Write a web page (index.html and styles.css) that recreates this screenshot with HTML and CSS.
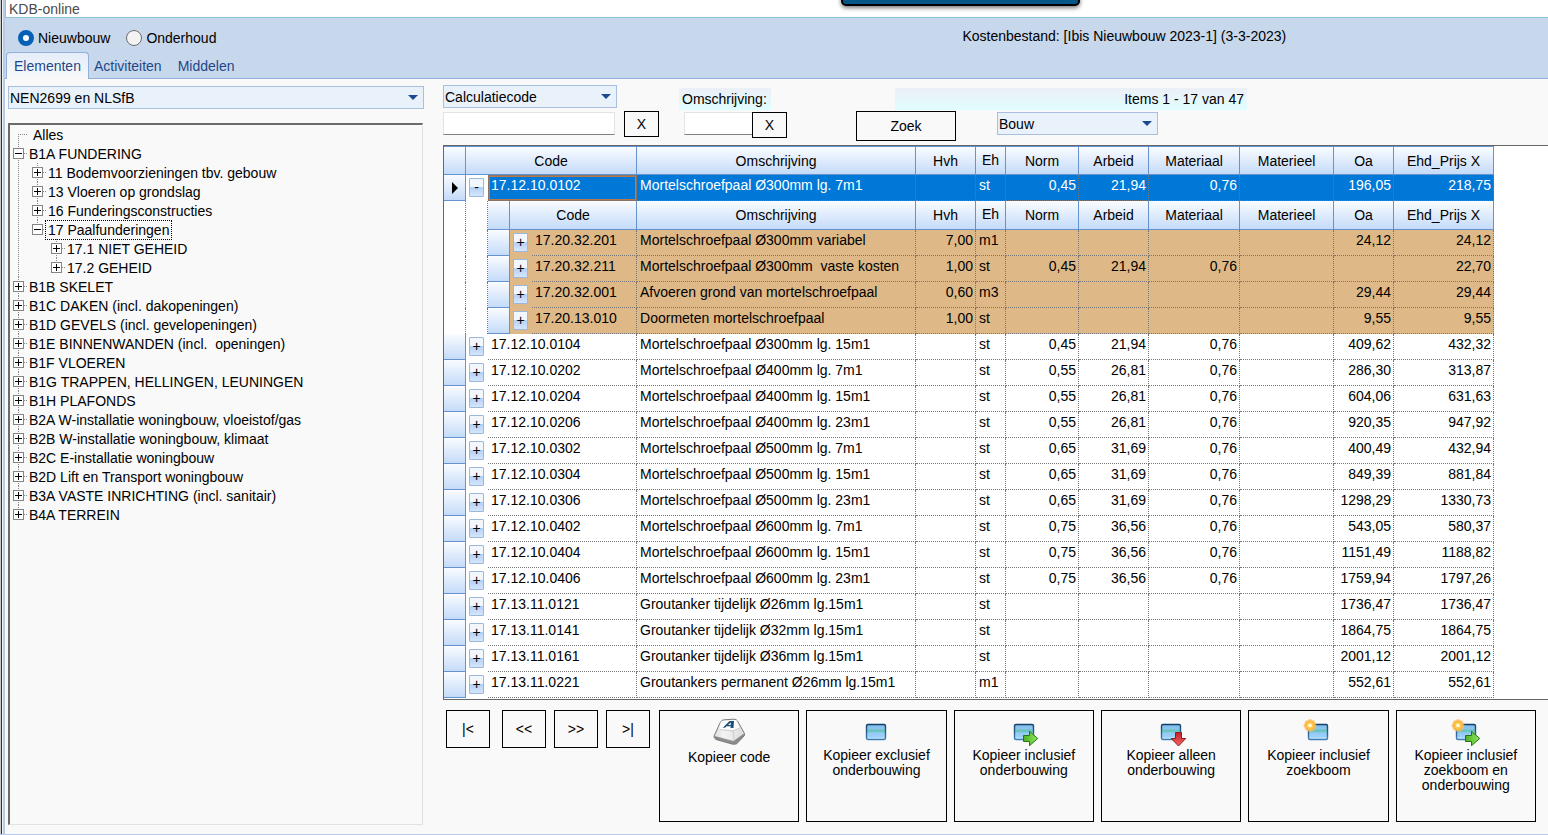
FILE: index.html
```html
<!DOCTYPE html>
<html lang="nl">
<head>
<meta charset="utf-8">
<title>KDB-online</title>
<link rel="stylesheet" href="styles.css">
</head>
<body>
<svg class="defs" width="0" height="0" aria-hidden="true">
  <defs>
    <linearGradient id="gWin" x1="0" y1="0" x2="0" y2="1"><stop offset="0" stop-color="#7fb9ec"/><stop offset=".3" stop-color="#8cc6ee"/><stop offset=".36" stop-color="#66c3bd"/><stop offset=".5" stop-color="#6fc6c4"/><stop offset=".55" stop-color="#93c9f5"/><stop offset=".8" stop-color="#9bd0fa"/><stop offset="1" stop-color="#d8f0fd"/></linearGradient>
    <linearGradient id="gEdge" x1="0" y1="0" x2="0" y2="1"><stop offset="0" stop-color="#123f66"/><stop offset="1" stop-color="#3f7fb4"/></linearGradient>
    <linearGradient id="gGreen" x1="0" y1="0" x2="1" y2="0"><stop offset="0" stop-color="#4fae24"/><stop offset="1" stop-color="#8bea5c"/></linearGradient>
    <linearGradient id="gRed" x1="0" y1="0" x2="0" y2="1"><stop offset="0" stop-color="#c41f26"/><stop offset="1" stop-color="#f4696a"/></linearGradient>
    <radialGradient id="gSun"><stop offset="0" stop-color="#fffbd6"/><stop offset=".3" stop-color="#ffd75a"/><stop offset=".7" stop-color="#f9b53e"/><stop offset="1" stop-color="#f9c983" stop-opacity=".35"/></radialGradient>
    <linearGradient id="gKey" x1="0" y1="0" x2="1" y2="0"><stop offset="0" stop-color="#d9d9d9"/><stop offset=".3" stop-color="#f4f4f4"/><stop offset="1" stop-color="#dcdcdc"/></linearGradient>
    <g id="win"><rect x="7.500" y="7.500" width="19" height="15" rx="1.500" fill="url(#gWin)" stroke="url(#gEdge)" stroke-width="1.400"/></g>
    <path id="green" d="M16.500 18.500h6v-4.200l8.200 7.200-8.200 7.200v-4.200h-6z" fill="url(#gGreen)" stroke="#28721a"/>
    <path id="red" d="M21.500 15.500h6v6h4.200l-7.200 7.500-7.200-7.500h4.200z" fill="url(#gRed)" stroke="#8e1b20"/>
    <g id="sun"><circle cx="9" cy="8.500" r="6.500" fill="url(#gSun)"/><path d="M9 2v13M2.500 8.500h13M4.400 4l9.200 9.200M13.600 4l-9.200 9.200" stroke="#f6ab3d" stroke-opacity=".6" stroke-width="1" stroke-dasharray="1.500 1"/><circle cx="9" cy="8.500" r="1.800" fill="#fffde8"/></g>
  </defs>
</svg>
<div class="window">
  <div class="callout"></div>
  <div class="titlebar">KDB-online</div>
  <header class="ribbon">
    <div class="modes">
      <label class="mode"><input type="radio" name="soort" checked>Nieuwbouw</label>
      <label class="mode"><input type="radio" name="soort">Onderhoud</label>
      <span class="bestand">Kostenbestand: [Ibis Nieuwbouw 2023-1] (3-3-2023)</span>
    </div>
    <nav class="tabs">
      <button class="tab active">Elementen</button>
      <button class="tab">Activiteiten</button>
      <button class="tab">Middelen</button>
    </nav>
  </header>

  <main class="content">
    <aside class="side">
      <div class="combo"><select aria-label="Indeling"><option>NEN2699 en NLSfB</option></select></div>
      <div class="treebox">
        <ul class="tree">
          <li class="first"><div class="node leaf">Alles</div></li>
          <li><div class="node"><button class="box minus" aria-label="Inklappen"></button><span>B1A FUNDERING</span></div>
            <ul>
              <li><div class="node"><button class="box" aria-label="Uitklappen"></button><span>11 Bodemvoorzieningen tbv. gebouw</span></div></li>
              <li><div class="node"><button class="box" aria-label="Uitklappen"></button><span>13 Vloeren op grondslag</span></div></li>
              <li><div class="node"><button class="box" aria-label="Uitklappen"></button><span>16 Funderingsconstructies</span></div></li>
              <li><div class="node"><button class="box minus" aria-label="Inklappen"></button><span class="focus">17 Paalfunderingen</span></div>
                <ul>
                  <li><div class="node"><button class="box" aria-label="Uitklappen"></button><span>17.1 NIET GEHEID</span></div></li>
                  <li><div class="node"><button class="box" aria-label="Uitklappen"></button><span>17.2 GEHEID</span></div></li>
                </ul>
              </li>
            </ul>
          </li>
          <li><div class="node"><button class="box" aria-label="Uitklappen"></button><span>B1B SKELET</span></div></li>
          <li><div class="node"><button class="box" aria-label="Uitklappen"></button><span>B1C DAKEN (incl. dakopeningen)</span></div></li>
          <li><div class="node"><button class="box" aria-label="Uitklappen"></button><span>B1D GEVELS (incl. gevelopeningen)</span></div></li>
          <li><div class="node"><button class="box" aria-label="Uitklappen"></button><span>B1E BINNENWANDEN (incl.&nbsp; openingen)</span></div></li>
          <li><div class="node"><button class="box" aria-label="Uitklappen"></button><span>B1F VLOEREN</span></div></li>
          <li><div class="node"><button class="box" aria-label="Uitklappen"></button><span>B1G TRAPPEN, HELLINGEN, LEUNINGEN</span></div></li>
          <li><div class="node"><button class="box" aria-label="Uitklappen"></button><span>B1H PLAFONDS</span></div></li>
          <li><div class="node"><button class="box" aria-label="Uitklappen"></button><span>B2A W-installatie woningbouw, vloeistof/gas</span></div></li>
          <li><div class="node"><button class="box" aria-label="Uitklappen"></button><span>B2B W-installatie woningbouw, klimaat</span></div></li>
          <li><div class="node"><button class="box" aria-label="Uitklappen"></button><span>B2C E-installatie woningbouw</span></div></li>
          <li><div class="node"><button class="box" aria-label="Uitklappen"></button><span>B2D Lift en Transport woningbouw</span></div></li>
          <li><div class="node"><button class="box" aria-label="Uitklappen"></button><span>B3A VASTE INRICHTING (incl. sanitair)</span></div></li>
          <li><div class="node"><button class="box" aria-label="Uitklappen"></button><span>B4A TERREIN</span></div></li>
        </ul>
      </div>
    </aside>

    <section class="work">
      <div class="filters">
        <div class="line">
          <div class="combo code-combo"><select aria-label="Zoekveld"><option>Calculatiecode</option></select></div>
          <label class="tint om-label" for="oms">Omschrijving:</label>
          <div class="tint items">Items 1 - 17 van 47</div>
        </div>
        <div class="line">
          <input class="field code-field" type="text" aria-label="Calculatiecode">
          <button class="btn x">X</button>
          <input class="field om-field" id="oms" type="text">
          <button class="btn x joined">X</button>
          <button class="btn zoek">Zoek</button>
          <div class="combo bouw-combo"><select aria-label="Type"><option>Bouw</option></select></div>
        </div>
      </div>

      <div class="gridbox">
        <table class="grid">
          <colgroup><col class="c22"><col class="c22"><col class="c22"><col class="c22"><col class="ccode"><col class="coms"><col class="c60"><col class="ceh"><col class="cnorm"><col class="carb"><col class="cmat"><col class="cmtl"><col class="c60"><col class="cehd"></colgroup>
          <thead>
            <tr><th></th><th colspan="4">Code</th><th>Omschrijving</th><th>Hvh</th><th class="eh">Eh</th><th>Norm</th><th>Arbeid</th><th>Materiaal</th><th>Materieel</th><th>Oa</th><th>Ehd_Prijs X</th></tr>
          </thead>
          <tbody>
            <tr class="sel"><td class="rh"><span class="pointer"></span></td><td class="ex"><button>-</button></td><td colspan="3" class="cur">17.12.10.0102</td><td>Mortelschroefpaal Ø300mm lg. 7m1</td><td></td><td>st</td><td class="n">0,45</td><td class="n">21,94</td><td class="n">0,76</td><td></td><td class="n">196,05</td><td class="n">218,75</td></tr>
            <tr class="subhead"><td class="gap"></td><td class="gap"></td><th></th><th colspan="2">Code</th><th>Omschrijving</th><th>Hvh</th><th class="eh">Eh</th><th>Norm</th><th>Arbeid</th><th>Materiaal</th><th>Materieel</th><th>Oa</th><th>Ehd_Prijs X</th></tr>
            <tr class="sub"><td class="gap"></td><td class="gap"></td><td class="rh"></td><td class="ex"><button>+</button></td><td>17.20.32.201</td><td>Mortelschroefpaal Ø300mm variabel</td><td class="n">7,00</td><td>m1</td><td></td><td></td><td></td><td></td><td class="n">24,12</td><td class="n">24,12</td></tr>
            <tr class="sub"><td class="gap"></td><td class="gap"></td><td class="rh"></td><td class="ex"><button>+</button></td><td>17.20.32.211</td><td>Mortelschroefpaal Ø300mm&nbsp; vaste kosten</td><td class="n">1,00</td><td>st</td><td class="n">0,45</td><td class="n">21,94</td><td class="n">0,76</td><td></td><td></td><td class="n">22,70</td></tr>
            <tr class="sub"><td class="gap"></td><td class="gap"></td><td class="rh"></td><td class="ex"><button>+</button></td><td>17.20.32.001</td><td>Afvoeren grond van mortelschroefpaal</td><td class="n">0,60</td><td>m3</td><td></td><td></td><td></td><td></td><td class="n">29,44</td><td class="n">29,44</td></tr>
            <tr class="sub"><td class="gap"></td><td class="gap"></td><td class="rh"></td><td class="ex"><button>+</button></td><td>17.20.13.010</td><td>Doormeten mortelschroefpaal</td><td class="n">1,00</td><td>st</td><td></td><td></td><td></td><td></td><td class="n">9,55</td><td class="n">9,55</td></tr>
            <tr><td class="rh"></td><td class="ex"><button>+</button></td><td colspan="3">17.12.10.0104</td><td>Mortelschroefpaal Ø300mm lg. 15m1</td><td></td><td>st</td><td class="n">0,45</td><td class="n">21,94</td><td class="n">0,76</td><td></td><td class="n">409,62</td><td class="n">432,32</td></tr>
            <tr><td class="rh"></td><td class="ex"><button>+</button></td><td colspan="3">17.12.10.0202</td><td>Mortelschroefpaal Ø400mm lg. 7m1</td><td></td><td>st</td><td class="n">0,55</td><td class="n">26,81</td><td class="n">0,76</td><td></td><td class="n">286,30</td><td class="n">313,87</td></tr>
            <tr><td class="rh"></td><td class="ex"><button>+</button></td><td colspan="3">17.12.10.0204</td><td>Mortelschroefpaal Ø400mm lg. 15m1</td><td></td><td>st</td><td class="n">0,55</td><td class="n">26,81</td><td class="n">0,76</td><td></td><td class="n">604,06</td><td class="n">631,63</td></tr>
            <tr><td class="rh"></td><td class="ex"><button>+</button></td><td colspan="3">17.12.10.0206</td><td>Mortelschroefpaal Ø400mm lg. 23m1</td><td></td><td>st</td><td class="n">0,55</td><td class="n">26,81</td><td class="n">0,76</td><td></td><td class="n">920,35</td><td class="n">947,92</td></tr>
            <tr><td class="rh"></td><td class="ex"><button>+</button></td><td colspan="3">17.12.10.0302</td><td>Mortelschroefpaal Ø500mm lg. 7m1</td><td></td><td>st</td><td class="n">0,65</td><td class="n">31,69</td><td class="n">0,76</td><td></td><td class="n">400,49</td><td class="n">432,94</td></tr>
            <tr><td class="rh"></td><td class="ex"><button>+</button></td><td colspan="3">17.12.10.0304</td><td>Mortelschroefpaal Ø500mm lg. 15m1</td><td></td><td>st</td><td class="n">0,65</td><td class="n">31,69</td><td class="n">0,76</td><td></td><td class="n">849,39</td><td class="n">881,84</td></tr>
            <tr><td class="rh"></td><td class="ex"><button>+</button></td><td colspan="3">17.12.10.0306</td><td>Mortelschroefpaal Ø500mm lg. 23m1</td><td></td><td>st</td><td class="n">0,65</td><td class="n">31,69</td><td class="n">0,76</td><td></td><td class="n">1298,29</td><td class="n">1330,73</td></tr>
            <tr><td class="rh"></td><td class="ex"><button>+</button></td><td colspan="3">17.12.10.0402</td><td>Mortelschroefpaal Ø600mm lg. 7m1</td><td></td><td>st</td><td class="n">0,75</td><td class="n">36,56</td><td class="n">0,76</td><td></td><td class="n">543,05</td><td class="n">580,37</td></tr>
            <tr><td class="rh"></td><td class="ex"><button>+</button></td><td colspan="3">17.12.10.0404</td><td>Mortelschroefpaal Ø600mm lg. 15m1</td><td></td><td>st</td><td class="n">0,75</td><td class="n">36,56</td><td class="n">0,76</td><td></td><td class="n">1151,49</td><td class="n">1188,82</td></tr>
            <tr><td class="rh"></td><td class="ex"><button>+</button></td><td colspan="3">17.12.10.0406</td><td>Mortelschroefpaal Ø600mm lg. 23m1</td><td></td><td>st</td><td class="n">0,75</td><td class="n">36,56</td><td class="n">0,76</td><td></td><td class="n">1759,94</td><td class="n">1797,26</td></tr>
            <tr><td class="rh"></td><td class="ex"><button>+</button></td><td colspan="3">17.13.11.0121</td><td>Groutanker tijdelijk Ø26mm lg.15m1</td><td></td><td>st</td><td></td><td></td><td></td><td></td><td class="n">1736,47</td><td class="n">1736,47</td></tr>
            <tr><td class="rh"></td><td class="ex"><button>+</button></td><td colspan="3">17.13.11.0141</td><td>Groutanker tijdelijk Ø32mm lg.15m1</td><td></td><td>st</td><td></td><td></td><td></td><td></td><td class="n">1864,75</td><td class="n">1864,75</td></tr>
            <tr><td class="rh"></td><td class="ex"><button>+</button></td><td colspan="3">17.13.11.0161</td><td>Groutanker tijdelijk Ø36mm lg.15m1</td><td></td><td>st</td><td></td><td></td><td></td><td></td><td class="n">2001,12</td><td class="n">2001,12</td></tr>
            <tr><td class="rh"></td><td class="ex"><button>+</button></td><td colspan="3">17.13.11.0221</td><td>Groutankers permanent Ø26mm lg.15m1</td><td></td><td>m1</td><td></td><td></td><td></td><td></td><td class="n">552,61</td><td class="n">552,61</td></tr>
          </tbody>
        </table>
      </div>

      <div class="actions">
        <div class="pager">
          <button class="btn first">|&lt;</button>
          <button class="btn">&lt;&lt;</button>
          <button class="btn">&gt;&gt;</button>
          <button class="btn">&gt;|</button>
        </div>
        <div class="copies">
          <button class="btn copy key">
            <svg width="34" height="30" viewBox="0 0 34 30" aria-hidden="true"><path d="M2 19L8.500 5Q9.500 3 12 2.800L22 2.200Q24.500 2.200 25.500 4L32.500 16.500V18.500L24.500 27 21 27.300 4 22.500Q2 21.500 2 19z" fill="url(#gKey)" stroke="#6f6f6f" stroke-width=".9"/><path d="M2.500 19L21.500 24 32 16.500V18.700L24.300 26.800 21 27 4 22.300Q2.500 21.500 2.500 19z" fill="#5b5b5b" fill-opacity=".65"/><path d="M9 4.500L23.500 3Q24.500 3 25.300 5L27.500 11 21.500 13 8 12.500Q7 12 7.500 10z" fill="#fcfcfc"/><path d="M7.500 12.500L21 14 22 23M21 14L27.500 11" fill="none" stroke="#c4c4c4" stroke-width=".8"/><path d="M8.500 10.500H11L17.500 4H22L21.500 11H18.500L18.800 9.200H14.500L13 10.800z" fill="#1b5079"/><path d="M16 8L18.900 5.500 18.700 8z" fill="#fff"/></svg>
            <span>Kopieer code</span></button>
          <button class="btn copy"><svg width="34" height="30" viewBox="0 0 34 30" aria-hidden="true"><use href="#win"/></svg><span>Kopieer exclusief onderbouwing</span></button>
          <button class="btn copy"><svg width="34" height="30" viewBox="0 0 34 30" aria-hidden="true"><use href="#win"/><use href="#green"/></svg><span>Kopieer inclusief onderbouwing</span></button>
          <button class="btn copy"><svg width="34" height="30" viewBox="0 0 34 30" aria-hidden="true"><use href="#win"/><use href="#red"/></svg><span>Kopieer alleen onderbouwing</span></button>
          <button class="btn copy"><svg width="34" height="30" viewBox="0 0 34 30" aria-hidden="true"><use href="#win"/><use href="#sun"/></svg><span>Kopieer inclusief zoekboom</span></button>
          <button class="btn copy"><svg width="34" height="30" viewBox="0 0 34 30" aria-hidden="true"><use href="#win"/><use href="#sun"/><use href="#green"/></svg><span>Kopieer inclusief zoekboom en onderbouwing</span></button>
        </div>
      </div>
    </section>
  </main>
</div>
</body>
</html>
```

FILE: styles.css
```css
* { box-sizing: border-box; }
body {
  margin: 0;
  font: 14px/16px "Liberation Sans", Arial, sans-serif;
  color: #000;
  background: #f9f9f9;
}
button, input, select { font: inherit; color: inherit; }
.defs { display: block; position: absolute; }

.window {
  position: relative;
  min-height: 100vh;
  display: flex;
  flex-direction: column;
  padding-left: 5px;
  background: linear-gradient(90deg, #c9c9c9 0 1px, #2c3238 1px 2px, #eef3f8 2px 3px, #b9cbe2 3px 5px, #f9f9f9 5px);
  border-bottom: 1px solid #b7cce8;
}
.callout {
  position: absolute;
  top: -14px;
  left: 841px;
  width: 239px;
  height: 20px;
  background: #035685;
  border: 2px solid #000;
  border-radius: 5px;
  box-shadow: 0 2px 4px #0008;
}
.titlebar {
  height: 18px;
  padding: 1px 3px;
  color: #4a4a4a;
  background: #fff;
  border-left: 1px solid #8fc3d3;
  border-bottom: 1px solid #8fc3d3;
}

.ribbon {
  height: 61px;
  display: flex;
  flex-direction: column;
  justify-content: space-between;
  background: #c7d7ec;
  border-bottom: 1px solid #93b0da;
}
.modes { display: flex; align-items: center; padding-top: 10px; padding-left: 13px; }
.mode { display: flex; align-items: center; gap: 4px; margin-right: 16px; }
.mode input {
  appearance: none;
  width: 16px;
  height: 16px;
  margin: 0;
  border: 1px solid #6d6d6d;
  border-radius: 50%;
  background: #f3f3f3;
}
.mode input:checked { border: 5px solid #0560b6; background: #fff; }
.bestand { margin-left: 730px; padding-bottom: 3px; }
.tabs { display: flex; padding-left: 1px; margin-bottom: -1px; }
.tab {
  height: 27px;
  padding: 0 5px;
  margin-right: 6px;
  border: 0;
  background: none;
  color: #1f4788;
}
.tab.active {
  padding: 0 7px;
  margin-right: 0;
  border: 1px solid #93b0da;
  border-bottom: 0;
  border-radius: 4px 4px 0 0;
  background: linear-gradient(#e4edf9, #f9f9f9);
}

.content { flex: 1; display: flex; }
.side { width: 419px; padding: 7px 0 9px 3px; display: flex; flex-direction: column; gap: 14px; }
.combo { position: relative; height: 23px; }
.combo select {
  appearance: none;
  display: block;
  width: 100%;
  height: 100%;
  padding: 0 20px 0 1px;
  border: 1px solid #a9bfdf;
  border-radius: 0;
  background: #e9f1fb;
}
.combo::after {
  content: "";
  position: absolute;
  top: 9px;
  right: 6px;
  border: 5px solid transparent;
  border-top-color: #1c4a92;
  border-bottom: 0;
}
.treebox {
  flex: 1;
  border: 2px solid;
  border-color: #6b6b6b #e2e2e2 #e2e2e2 #6b6b6b;
  border-right-width: 1px;
  border-bottom-width: 1px;
  margin-right: 1px;
}
.tree, .tree ul { list-style: none; margin: 0; padding: 0; }
.tree ul { padding-left: 19px; }
.tree li {
  background: repeating-linear-gradient(#888 0 1px, transparent 1px 2px) 8px 0 / 1px 100% no-repeat;
}
.tree li:last-child { background-size: 1px 9px; }
.tree li.first { background-position: 8px 9px; }
.node {
  display: flex;
  align-items: center;
  height: 19px;
  padding-left: 3px;
  white-space: nowrap;
  background: repeating-linear-gradient(90deg, #888 0 1px, transparent 1px 2px) 10px 9px / 7px 1px no-repeat;
}
.node.leaf { padding-left: 23px; background-size: 9px 1px; background-position: 8px 9px; }
.node span { padding: 1px 2px; margin-left: 3px; }
.focus { outline: 1px dotted #000; }
.box {
  width: 11px;
  height: 11px;
  padding: 0;
  border: 1px solid #848484;
  background:
    linear-gradient(#000, #000) center / 7px 1px no-repeat,
    linear-gradient(#000, #000) center / 1px 7px no-repeat,
    #fff;
}
.box.minus { background: linear-gradient(#000, #000) center / 7px 1px no-repeat, #fff; }

.work { flex: 1; min-width: 0; padding-left: 19px; display: flex; flex-direction: column; }
.filters { display: flex; flex-direction: column; gap: 1px; height: 66px; padding-top: 6px; }
.line { display: flex; align-items: flex-start; }
.code-combo { width: 174px; }
.tint {
  height: 22px;
  margin-top: 3px;
  padding: 3px;
  background: linear-gradient(#eceff6, #e0fdff);
}
.om-label { margin-left: 62px; width: 92px; }
.items { margin-left: 124px; width: 352px; text-align: right; }
.btn { padding: 0; border: 1px solid #000; background: #f9f9f9; }
.field {
  height: 23px;
  margin-top: 1px;
  border: 1px solid #e3e3e3;
  border-bottom-color: #808080;
  background: #fff;
}
.code-field { width: 172px; }
.om-field { width: 68px; margin-left: 25px; border-right: 0; }
.x { width: 35px; height: 26px; margin-left: 9px; }
.x.joined { margin-left: 0; margin-top: 1px; }
.zoek { width: 100px; height: 30px; margin-left: 69px; }
.bouw-combo { width: 161px; margin-left: 41px; margin-top: 1px; }

.gridbox {
  height: 555px;
  overflow: hidden;
  background: #fff;
  border: 1px solid #666;
  border-right: 0;
}
.grid { width: 1050px; table-layout: fixed; border-collapse: separate; border-spacing: 0; }
.c22 { width: 22px; }
.ccode { width: 105px; }
.coms { width: 279px; }
.c60 { width: 60px; }
.ceh { width: 30px; }
.cnorm { width: 73px; }
.carb { width: 70px; }
.cmat { width: 91px; }
.cmtl { width: 94px; }
.cehd { width: 100px; }
.grid th {
  height: 29px;
  padding: 0;
  font-weight: normal;
  border-right: 1px solid #6593cf;
  border-bottom: 1px solid #6593cf;
  background: linear-gradient(#fafcff, #c4dbf9);
}
.grid thead th { border-top: 1px solid #6593cf; }
.grid th.eh { padding-bottom: 2px; }
.grid td {
  height: 26px;
  padding: 2px 2px 0 3px;
  vertical-align: top;
  white-space: nowrap;
  border-right: 1px dotted #777;
  border-bottom: 1px dotted #777;
}
.grid td.n { text-align: right; }
.grid .sub td { background: #deb887; }
.grid .sel td { background: #0078d7; color: #fff; }
.grid td.rh, .grid .sub td.rh, .grid .sel td.rh {
  padding: 0;
  vertical-align: middle;
  border-right: 1px solid #6593cf;
  border-bottom: 1px solid #6593cf;
  background: linear-gradient(#fafcff, #c4dbf9);
}
.grid td.ex { padding: 3px 3px 0; border: 0; }
.grid .sel td.ex { background: #fff; }
.grid td.gap, .grid .sub td.gap { border-bottom: 0; background: #fff; }
.grid .sel td.cur { padding: 1px 2px 0; border: 1px solid #8a7468; outline: 1px solid #b57b4e; outline-offset: -2px; }
.ex button {
  display: block;
  width: 15px;
  height: 19px;
  padding: 0;
  border: 1px solid #9bb7dc;
  border-radius: 1px;
  line-height: 15px;
  color: #000;
  background: linear-gradient(#f2f7fe 0 45%, #b5d0f5 50%, #d5e6fc);
}
.pointer {
  display: block;
  width: 6px;
  margin-left: 8px;
  border: 6px solid transparent;
  border-left-color: #000;
  border-right: 0;
}

.actions { display: flex; align-items: flex-start; padding: 10px 12px 0 3px; }
.pager { display: flex; gap: 8px; margin-right: 9px; }
.pager .btn { width: 44px; height: 38px; }
.pager .first { margin-right: 4px; }
.copies { flex: 1; display: grid; grid-template-columns: repeat(6, 1fr); gap: 7px; }
.copy {
  display: flex;
  flex-direction: column;
  align-items: center;
  height: 112px;
  padding: 6px 8px 0;
  line-height: 15px;
}
.copy svg { display: block; flex: none; }
.copy span { margin-top: 1px; }
.copy.key span { margin-top: 3px; }
```
